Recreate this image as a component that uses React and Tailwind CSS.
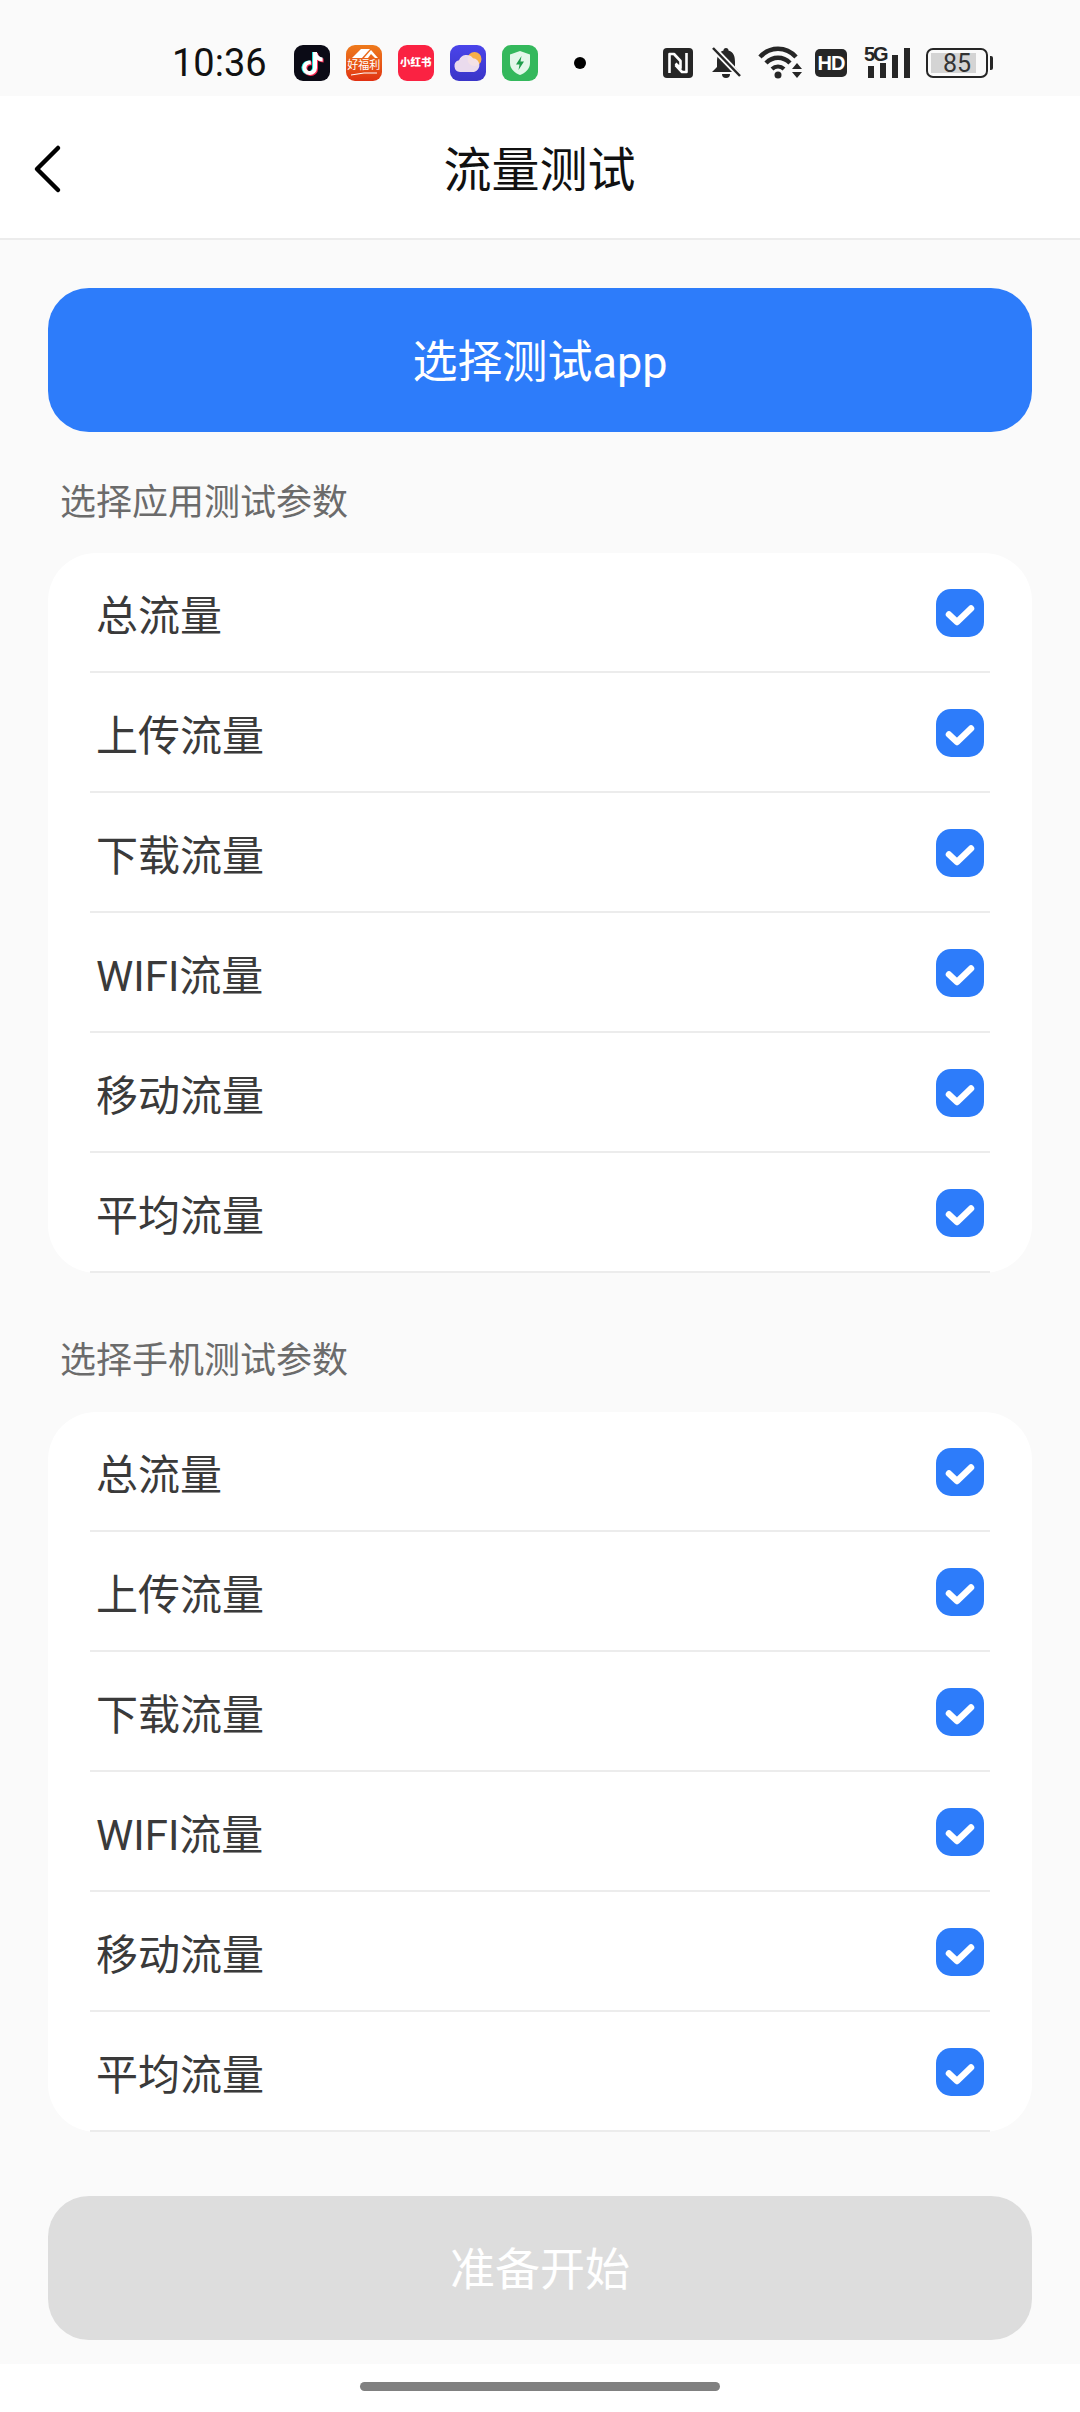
import { FaTiktok } from "react-icons/fa6";

const params = ["总流量", "上传流量", "下载流量", "WIFI流量", "移动流量", "平均流量"];

function CheckBox() {
  return (
    <svg width="48" height="48" viewBox="0 0 48 48" className="mt-[2px]">
      <rect width="48" height="48" rx="15" fill="#2d7cfa" />
      <path d="M13 25.5 L21 33 L35 19.5" stroke="#fff" strokeWidth="6.5" fill="none" strokeLinecap="round" strokeLinejoin="round" />
    </svg>
  );
}

function ParamCard() {
  return (
    <div className="rounded-[48px] bg-white">
      {params.map((p) => (
        <div key={p} className="mx-[42px] flex h-[120px] items-center justify-between border-b-2 border-[#ececec] pl-[6px] pr-[6px]">
          <span className="pt-[10px] text-[42px] leading-none text-[#3a3a3a]">{p}</span>
          <CheckBox />
        </div>
      ))}
    </div>
  );
}

function AppIcons() {
  return (
    <div className="ml-[27px] flex items-center gap-[16px]">
      <div className="relative flex h-[36px] w-[36px] items-center justify-center rounded-[9px] bg-[#0b0b16]">
        <FaTiktok className="absolute left-[6px] top-[7px] text-[23px] text-[#25f4ee]" />
        <FaTiktok className="absolute left-[8px] top-[8px] text-[23px] text-[#fe2c55]" />
        <FaTiktok className="absolute left-[7px] top-[7px] text-[23px] text-white" />
      </div>
      <div className="flex h-[36px] w-[36px] flex-col items-center overflow-hidden rounded-[9px] bg-gradient-to-b from-[#ee7a1c] to-[#e02f12]">
        <svg width="30" height="11" viewBox="0 0 30 11" className="mt-[3px] shrink-0">
          <path d="M3 10 L12 1 L21 1 L13 10 Z" fill="#fff" />
          <path d="M15 10 L22 2 L29 10 L26 10 L22 6 L19 10 Z" fill="#fff" />
        </svg>
        <span className="text-[11px] leading-[13px] whitespace-nowrap text-white">好福利</span>
        <svg width="28" height="4" viewBox="0 0 28 4" className="shrink-0">
          <path d="M1 3 Q14 0 27 1" stroke="#fff" strokeWidth="1" fill="none" />
        </svg>
      </div>
      <div className="flex h-[36px] w-[36px] items-center justify-center rounded-[9px] bg-[#fa2242]">
        <span className="text-[10.5px] leading-none font-black whitespace-nowrap text-white">小红书</span>
      </div>
      <div className="h-[36px] w-[36px] overflow-hidden rounded-[9px] bg-gradient-to-b from-[#4a44ea] to-[#3a35c8]">
        <svg width="36" height="36" viewBox="0 0 36 36">
          <circle cx="24.5" cy="14" r="7" fill="#f8b04a" />
          <path d="M10 27 a6 6 0 0 1 -1 -11.8 a8 8 0 0 1 14 -2 a7 7 0 0 1 1 13.8 Z" fill="#f3e4ee" opacity="0.95" />
        </svg>
      </div>
      <div className="flex h-[36px] w-[36px] items-center justify-center rounded-[9px] bg-[#34b85c]">
        <svg width="24" height="26" viewBox="0 0 24 26">
          <path d="M12 1 L22 4.5 V13 C22 19 17 23 12 25 C7 23 2 19 2 13 V4.5 Z" fill="#e4f7e9" />
          <path d="M13.5 6 L8 14.5 H11.5 L10.5 20 L16 11.5 H12.5 Z" fill="#1f9d4a" />
        </svg>
      </div>
      <div className="ml-[20px] h-[12px] w-[12px] rounded-full bg-black" />
    </div>
  );
}

function SystemIcons() {
  return (
    <div className="absolute left-[663px] top-[45px] flex h-[36px] items-center">
      <svg width="30" height="30" viewBox="0 0 30 30">
        <rect width="30" height="30" rx="4" fill="#262626" />
        <path d="M6.5 25 V6 H11 L17.5 13 V20 L12.5 15.5" stroke="#fff" strokeWidth="2.6" fill="none" strokeLinejoin="round" />
        <path d="M23.5 5 V24 H19 L12.5 17" stroke="#fff" strokeWidth="2.6" fill="none" strokeLinejoin="round" />
      </svg>
      <svg width="30" height="32" viewBox="0 0 30 32" className="ml-[18px]">
        <path d="M15 1 a2.5 2.5 0 0 1 2.5 2.5 C23 5 24 10 24 15 V20 L29 25 H1 L6 20 V15 C6 10 7 5 12.5 3.5 A2.5 2.5 0 0 1 15 1 Z" fill="#262626" />
        <path d="M11 27 H19 A4 4 0 0 1 11 27 Z" fill="#262626" />
        <path d="M2 1 L29 29" stroke="#fafafa" strokeWidth="6" />
        <path d="M2 1 L29 29" stroke="#262626" strokeWidth="2.5" />
      </svg>
      <svg width="44" height="34" viewBox="0 0 44 34" className="ml-[17px]">
        <path d="M2 11 C12 0 28 0 38 11" stroke="#262626" strokeWidth="4.5" fill="none" />
        <path d="M8 17 C15 10 25 10 32 17" stroke="#262626" strokeWidth="4.5" fill="none" />
        <path d="M14 23 C17.5 19.5 22.5 19.5 26 23" stroke="#262626" strokeWidth="4" fill="none" />
        <circle cx="20" cy="29" r="3.5" fill="#262626" />
        <path d="M34 23 L39 17 L44 23 Z M34 26 H44 L39 32 Z" fill="#262626" />
      </svg>
      <div className="ml-[13px] flex h-[28px] w-[32px] items-center justify-center rounded-[5px] bg-[#262626]">
        <span className="text-[20px] leading-none font-bold tracking-[-1px] text-white [font-family:'Liberation_Sans',sans-serif]">HD</span>
      </div>
      <div className="relative ml-[17px] h-[36px] w-[46px]">
        <span className="absolute -top-[1px] left-0 text-[20px] leading-none font-bold tracking-[-2px] text-[#262626] [font-family:'Liberation_Sans',sans-serif]">5G</span>
        <div className="absolute bottom-[3px] left-[4px] flex items-end gap-[6px]">
          <div className="h-[12px] w-[6px] bg-[#262626]" />
          <div className="h-[15px] w-[6px] bg-[#262626]" />
          <div className="h-[23px] w-[6px] bg-[#262626]" />
          <div className="h-[30px] w-[6px] bg-[#262626]" />
        </div>
      </div>
      <div className="relative ml-[16px] h-[30px] w-[62px] rounded-[7px] border-2 border-[#262626] p-[3px]">
        <div className="h-full w-[45px] bg-[#d4d4d4]" />
        <span className="absolute inset-0 flex items-center justify-center text-[25px] leading-none text-[#333333]">85</span>
        <div className="absolute top-[6px] -right-[7px] h-[14px] w-[3px] rounded-r-[2px] bg-[#262626]" />
      </div>
    </div>
  );
}

export default function App() {
  return (
    <div className="relative flex h-[2412px] w-[1080px] flex-col overflow-hidden bg-[#fafafa] [font-family:Roboto,'Noto_Sans_CJK_SC',sans-serif]">
      {/* Status bar */}
      <div className="flex h-[96px] shrink-0 items-center pt-[30px] pl-[172px]">
        <span className="text-[38px] leading-none text-[#111111]">10:36</span>
        <AppIcons />
        <SystemIcons />
      </div>

      {/* Header */}
      <div className="relative flex h-[144px] shrink-0 items-center justify-center border-b-2 border-[#ececec] bg-white">
        <svg width="30" height="50" viewBox="0 0 30 50" className="absolute top-[48px] left-[32px]">
          <path d="M26 4 L5 25 L26 46" stroke="#000" strokeWidth="4.5" fill="none" strokeLinecap="round" strokeLinejoin="round" />
        </svg>
        <span className="-ml-[1px] pt-[8px] text-[48px] leading-none text-[#111111]">流量测试</span>
      </div>

      <div className="flex flex-1 flex-col px-[48px] pt-[48px]">
        <div className="flex h-[144px] items-center justify-center rounded-[41px] bg-[#2d7cfa]">
          <span className="pt-[4px] text-[45px] leading-none text-white">选择测试app</span>
        </div>

        <div className="flex h-[121px] items-center pt-[20px] pl-[12px] text-[36px] leading-none text-[#6b6b6b]">选择应用测试参数</div>
        <ParamCard />

        <div className="flex h-[139px] items-center pt-[36px] pl-[12px] text-[36px] leading-none text-[#6b6b6b]">选择手机测试参数</div>
        <ParamCard />

        <div className="mt-[64px] flex h-[144px] items-center justify-center rounded-[41px] bg-[#dddddd]">
          <span className="pt-[4px] text-[45px] leading-none text-white">准备开始</span>
        </div>
      </div>

      {/* Gesture bar */}
      <div className="flex h-[48px] shrink-0 justify-center bg-white pt-[18px]">
        <div className="h-[9px] w-[360px] rounded-full bg-[#808080]" />
      </div>
    </div>
  );
}
